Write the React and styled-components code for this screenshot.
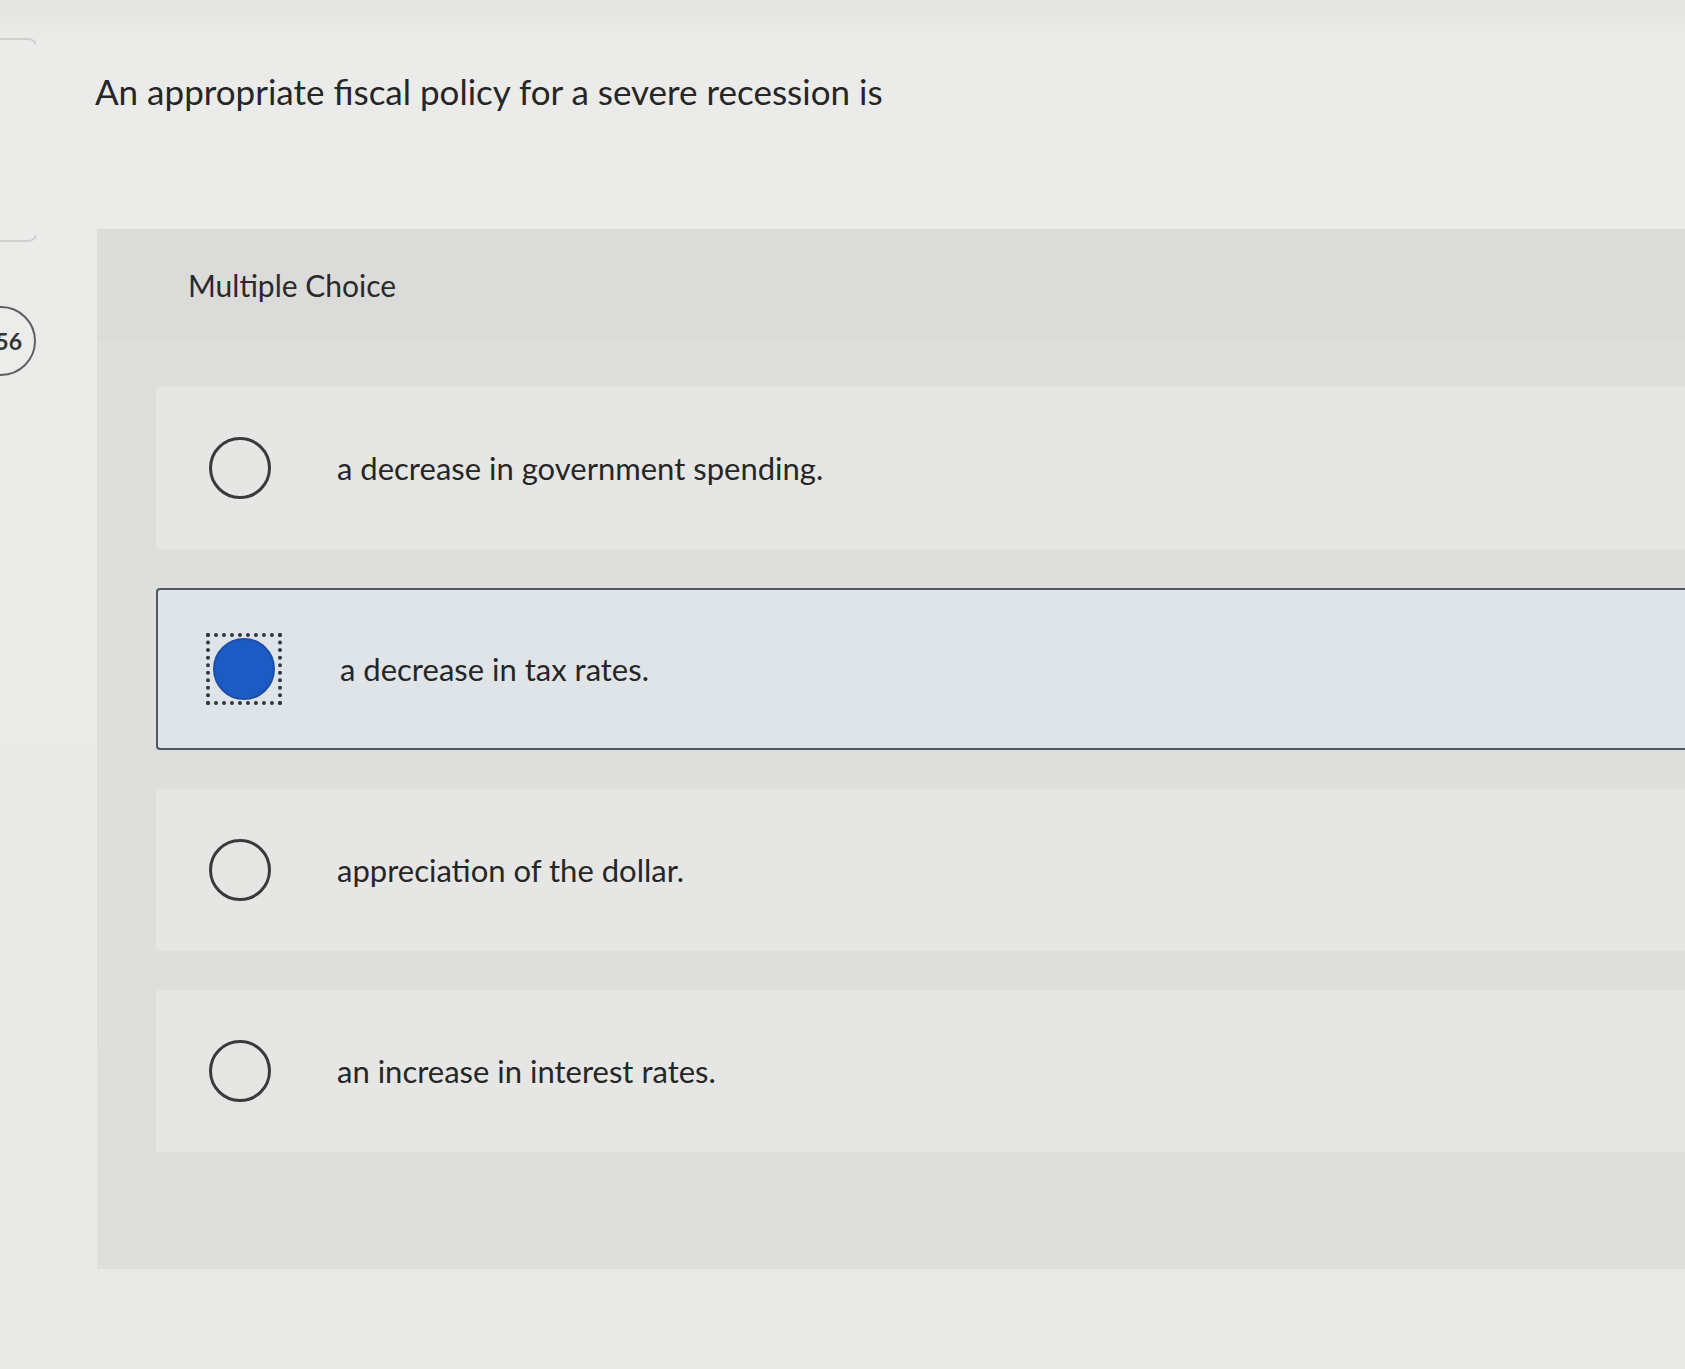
import React from "react"
import styled, { createGlobalStyle } from "styled-components"

const GlobalStyle = createGlobalStyle`
  html, body {
    margin: 0;
    padding: 0;
    background: #e9e9e8;
    font-family: Lato, "Open Sans", sans-serif;
    color: #262626;
  }
`

const Page = styled.div`
  display: flex;
  width: 1685px;
  height: 1369px;
  overflow: hidden;
  background: linear-gradient(180deg, #e4e4e3 0px, #ebebea 40px, #e9e9e8 100%);
`

const Rail = styled.aside`
  width: 36px;
  flex: none;
  overflow: hidden;
  display: flex;
  flex-direction: column;
  padding-top: 38px;
`

const RailCard = styled.div`
  width: 34px;
  height: 200px;
  margin-left: -8px;
  padding-left: 8px;
  border: 2px solid #cfcfce;
  border-radius: 0 10px 10px 0;
  background: #ebebea;
`

const Badge = styled.div`
  margin-top: 64px;
  margin-left: -34px;
  width: 70px;
  height: 70px;
  border: 2px solid #5f5f5f;
  border-radius: 50%;
  display: flex;
  align-items: center;
  justify-content: flex-end;
  padding-right: 12px;
  box-sizing: border-box;
  font-size: 23px;
  font-weight: 700;
  color: #333;
  background: #ececeb;
`

const Main = styled.main`
  flex: 1;
  padding-left: 59px;
  display: flex;
  flex-direction: column;
`

const Question = styled.h1`
  margin: 70px 0 0 0;
  font-size: 35px;
  line-height: 42px;
  font-weight: 400;
  color: #262626;
  height: 159px;
`

const ChoicePanel = styled.section`
  margin-left: 2px;
  height: 1040px;
  background: #dededd;
  display: flex;
  flex-direction: column;
`

const PanelHeader = styled.div`
  height: 112px;
  padding-left: 91px;
  display: flex;
  align-items: center;
  font-size: 30px;
  color: #2a2a2a;
  background: #dbdbda;
`

const Options = styled.div`
  display: flex;
  flex-direction: column;
  gap: 39px;
  padding: 46px 0 0 59px;
`

const Option = styled.label`
  display: flex;
  align-items: center;
  height: 162px;
  box-sizing: border-box;
  padding-left: ${(p) => (p.selected ? "48px" : "51px")};
  background: ${(p) => (p.selected ? "#dfe4e8" : "#e6e6e5")};
  border: ${(p) => (p.selected ? "2px solid #4b5866" : "2px solid transparent")};
  border-right: none;
  border-radius: 4px 0 0 4px;
  font-size: 31px;
  color: #262626;
`

const FocusRing = styled.span`
  width: 76px;
  height: 72px;
  box-sizing: border-box;
  border: 4px dotted #2f3640;
  display: flex;
  align-items: center;
  justify-content: center;
`

const Radio = styled.span`
  width: 62px;
  height: 62px;
  box-sizing: border-box;
  border-radius: 50%;
  flex: none;
  border: ${(p) => (p.checked ? "2px solid #1b4fa8" : "3px solid #3a3a3a")};
  background: ${(p) => (p.checked ? "#1d5bc4" : "transparent")};
`

const OptionText = styled.span`
  margin-left: ${(p) => (p.selected ? "58px" : "66px")};
`

const choices = [
  "a decrease in government spending.",
  "a decrease in tax rates.",
  "appreciation of the dollar.",
  "an increase in interest rates.",
]

export default function App() {
  const selected = 1
  return (
    <>
      <GlobalStyle />
      <Page>
        <Rail>
          <RailCard />
          <Badge>56</Badge>
        </Rail>
        <Main>
          <Question>An appropriate fiscal policy for a severe recession is</Question>
          <ChoicePanel>
            <PanelHeader>Multiple Choice</PanelHeader>
            <Options>
              {choices.map((c, i) => (
                <Option key={c} selected={i === selected}>
                  {i === selected ? (
                    <FocusRing>
                      <Radio checked />
                    </FocusRing>
                  ) : (
                    <Radio />
                  )}
                  <OptionText selected={i === selected}>{c}</OptionText>
                </Option>
              ))}
            </Options>
          </ChoicePanel>
        </Main>
      </Page>
    </>
  )
}
